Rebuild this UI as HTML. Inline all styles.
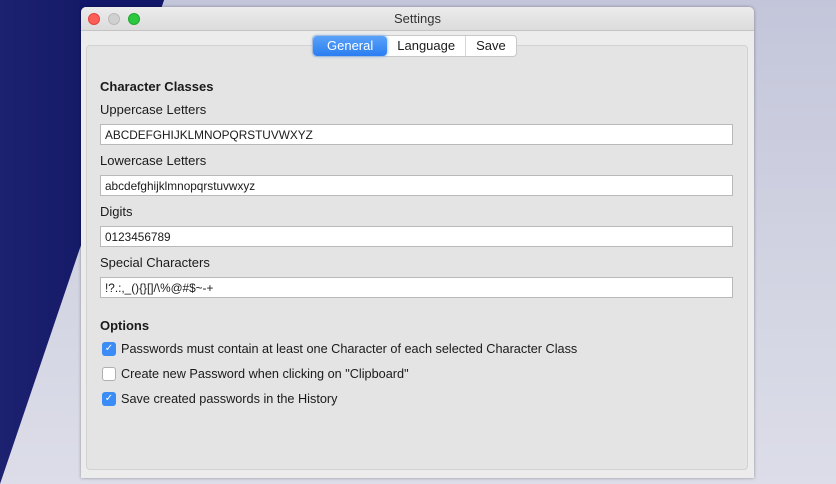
<!DOCTYPE html>
<html><head><meta charset="utf-8"><style>
*{box-sizing:border-box;margin:0;padding:0}
body{width:836px;height:484px;overflow:hidden;position:relative;background:linear-gradient(180deg,#c3c5da 0%,#d3d5e3 60%,#dcdde8 100%);font-family:"Liberation Sans",sans-serif;color:#1a1a1a}
.navy{position:absolute;left:0;top:0;width:836px;height:484px}
.win{position:absolute;left:81px;top:7px;width:673px;height:471px;background:#ececec;border-radius:5px 5px 0 0;box-shadow:0 0 3px rgba(0,0,0,.35)}
.tb{height:24px;background:linear-gradient(#ececec,#dcdcdc);border-bottom:1px solid #c4c4c4;border-radius:5px 5px 0 0;text-align:center;font-size:13px;line-height:24px;color:#333}
.dot{position:absolute;top:6px;width:12px;height:12px;border-radius:50%}
.panel{position:absolute;left:5px;top:38px;width:662px;height:425px;background:#e4e4e4;border:1px solid #d2d2d2;border-radius:4px}
.seg{position:absolute;left:231px;top:28px;height:22px;display:flex;background:#fff;border:1px solid #c8c8c8;border-radius:4px;font-size:13px;line-height:20px;z-index:2}
.seg div{padding:0 10px;border-left:1px solid #d8d8d8}
.seg .on{background:linear-gradient(#5aa2f8,#2a7ef2);color:#fff;border:none;border-radius:4px;padding:0 14px;box-shadow:0 0 3px #6aa8f5}
.t{position:absolute;left:100px;font-size:13px}
.b{font-weight:bold}
.f{position:absolute;left:100px;width:633px;height:21px;background:#fff;border:1px solid #b9b9b9;font-size:11.8px;line-height:21px;padding-left:4px}
.cb{position:absolute;left:102px;width:14px;height:14px;border-radius:3px;background:#3b8df5;color:#fff;font-size:10px;text-align:center;line-height:14px}
.cb.off{background:#fff;border:1px solid #b0b0b0}
.ct{position:absolute;left:121px;font-size:12.7px}
</style></head><body>
<svg class="navy" viewBox="0 0 836 484"><defs><linearGradient id="g" x1="0" y1="0" x2="1" y2="0"><stop offset="0" stop-color="#1c2170"/><stop offset="1" stop-color="#101460"/></linearGradient></defs><polygon points="0,0 164,0 80,248 0,484" fill="url(#g)"/><polygon points="164,0 80,248 80,0" fill="#13176a"/></svg>
<div class="win">
<div class="tb">Settings</div>
<div class="dot" style="left:7px;background:#fc5f57;border:1px solid #e0443e"></div>
<div class="dot" style="left:27px;background:#d0d0d0;border:1px solid #bbb"></div>
<div class="dot" style="left:47px;background:#2bc840;border:1px solid #1ea830"></div>
<div class="panel"></div>
<div class="seg"><div class="on">General</div><div style="border-left:none">Language</div><div>Save</div></div>
</div>
<div class="t b" style="top:79px">Character Classes</div>
<div class="t" style="top:102px">Uppercase Letters</div>
<div class="f" style="top:124px">ABCDEFGHIJKLMNOPQRSTUVWXYZ</div>
<div class="t" style="top:153px">Lowercase Letters</div>
<div class="f" style="top:175px">abcdefghijklmnopqrstuvwxyz</div>
<div class="t" style="top:204px">Digits</div>
<div class="f" style="top:226px">0123456789</div>
<div class="t" style="top:255px">Special Characters</div>
<div class="f" style="top:277px">!?.:,_(){}[]/\%@#$~-+</div>
<div class="t b" style="top:318px">Options</div>
<div class="cb" style="top:342px">✓</div><div class="ct" style="top:342px">Passwords must contain at least one Character of each selected Character Class</div>
<div class="cb off" style="top:367px"></div><div class="ct" style="top:367px">Create new Password when clicking on "Clipboard"</div>
<div class="cb" style="top:392px">✓</div><div class="ct" style="top:392px">Save created passwords in the History</div>
</body></html>
